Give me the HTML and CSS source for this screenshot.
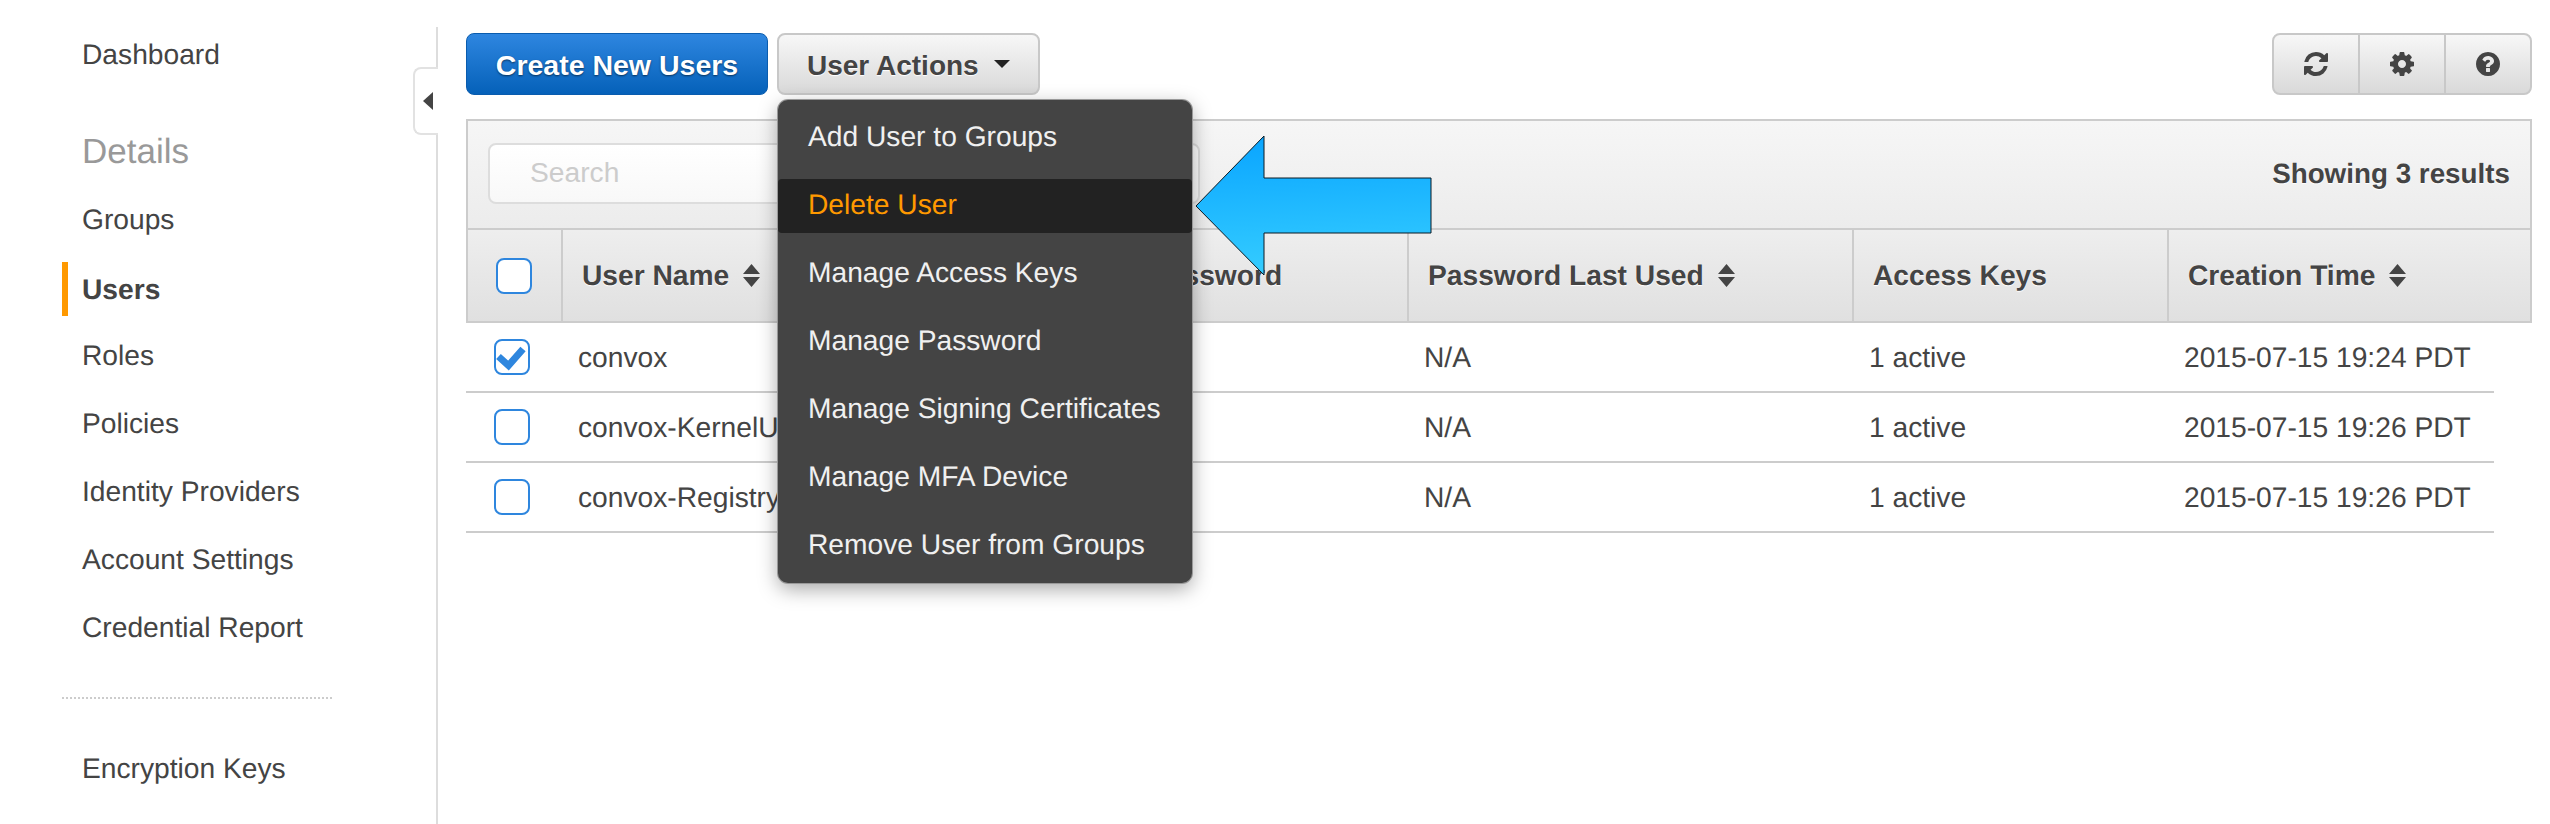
FILE: index.html
```html
<!DOCTYPE html>
<html lang="en">
<head>
<meta charset="utf-8">
<title>Users</title>
<link rel="stylesheet" href="styles.css">
</head>
<body>
<div class="app">
  <nav class="sidebar">
    <a class="nav-item">Dashboard</a>
    <h2 class="nav-heading">Details</h2>
    <a class="nav-item">Groups</a>
    <a class="nav-item active">Users</a>
    <a class="nav-item">Roles</a>
    <a class="nav-item">Policies</a>
    <a class="nav-item">Identity Providers</a>
    <a class="nav-item">Account Settings</a>
    <a class="nav-item">Credential Report</a>
    <div class="nav-divider"></div>
    <a class="nav-item">Encryption Keys</a>
  </nav>
  <div class="rail">
    <div class="rail-tab"><span class="rail-caret"></span></div>
  </div>
  <main class="main">
    <div class="actions">
      <button class="btn btn-primary">Create New Users</button>
      <div class="dropdown">
        <button class="btn btn-default">User Actions<span class="caret"></span></button>
        <ul class="menu">
          <li class="menu-item">Add User to Groups</li>
          <li class="menu-item selected">Delete User</li>
          <li class="menu-item">Manage Access Keys</li>
          <li class="menu-item">Manage Password</li>
          <li class="menu-item">Manage Signing Certificates</li>
          <li class="menu-item">Manage MFA Device</li>
          <li class="menu-item">Remove User from Groups</li>
        </ul>
      </div>
      <div class="btn-group">
        <button class="icon-btn" aria-label="Refresh">
          <svg class="icon" viewBox="0 0 1792 1792"><path d="M1639 1056q0 5-1 7-64 268-268 434.5t-478 166.5q-146 0-282.5-55t-243.5-157l-129 129q-19 19-45 19t-45-19-19-45v-448q0-26 19-45t45-19h448q26 0 45 19t19 45-19 45l-137 137q71 66 161 102t187 36q134 0 250-65t186-179q11-17 53-117 8-23 30-23h192q13 0 22.5 9.5t9.5 22.5zm25-800v448q0 26-19 45t-45 19h-448q-26 0-45-19t-19-45 19-45l138-138q-148-137-349-137-134 0-250 65t-186 179q-11 17-53 117-8 23-30 23h-199q-13 0-22.5-9.5t-9.5-22.5v-7q65-268 270-434.5t480-166.5q146 0 284 55.5t245 156.5l130-129q19-19 45-19t45 19 19 45z"/></svg>
        </button>
        <button class="icon-btn" aria-label="Settings">
          <svg class="icon" viewBox="0 0 1792 1792"><path d="M1152 896q0-106-75-181t-181-75-181 75-75 181 75 181 181 75 181-75 75-181zm512-109v222q0 12-8 23t-20 13l-185 28q-19 54-39 91 35 50 107 138 10 12 10 25t-9 23q-27 37-99 108t-94 71q-12 0-26-9l-138-108q-44 23-91 38-16 136-29 186-7 28-36 28h-222q-14 0-24.5-8.5t-11.5-21.5l-28-184q-49-16-90-37l-141 107q-10 9-25 9-14 0-25-11-126-114-165-168-7-10-7-23 0-12 8-23 15-21 51-66.5t54-70.5q-27-50-41-99l-183-27q-13-2-21-12.5t-8-23.5v-222q0-12 8-23t19-13l186-28q14-46 39-92-40-57-107-138-10-12-10-24 0-10 9-23 26-36 98.5-107.5t94.5-71.5q13 0 26 10l138 107q44-23 91-38 16-136 29-186 7-28 36-28h222q14 0 24.5 8.5t11.5 21.5l28 184q49 16 90 37l142-107q9-9 24-9 13 0 25 10 129 119 165 170 7 8 7 22 0 12-8 23-15 21-51 66.5t-54 70.5q26 50 41 98l183 28q13 2 21 12.5t8 23.5z"/></svg>
        </button>
        <button class="icon-btn" aria-label="Help">
          <svg class="icon" viewBox="0 0 1792 1792"><path d="M1024 1376v-192q0-14-9-23t-23-9h-192q-14 0-23 9t-9 23v192q0 14 9 23t23 9h192q14 0 23-9t9-23zm256-672q0-88-55.5-163t-138.5-116-170-41q-243 0-371 213-15 24 8 42l132 100q7 6 19 6 16 0 25-12 53-68 86-92 34-24 86-24 48 0 85.5 26t37.5 59q0 38-20 61t-68 45q-63 28-115.5 86.5t-52.5 125.5v36q0 14 9 23t23 9h192q14 0 23-9t9-23q0-19 21.5-49.5t54.5-49.5q32-18 49-28.5t46-35 44.5-48 28-60.5 12.5-81zm384 192q0 209-103 385.5t-279.5 279.5-385.5 103-385.5-103-279.5-279.5-103-385.5 103-385.5 279.5-279.5 385.5-103 385.5 103 279.5 279.5 103 385.5z"/></svg>
        </button>
      </div>
    </div>

    <section class="panel">
      <div class="filter-bar">
        <input class="search" type="text" placeholder="Search">
        <span class="count">Showing 3 results</span>
      </div>
      <div class="row head">
        <div class="cell check-cell"><span class="checkbox"></span></div>
        <div class="cell">User Name<svg class="sort" viewBox="0 0 17 23"><path d="M8.500 0L17 10H0zM0 13h17L8.500 23z"/></svg></div>
        <div class="cell">Password</div>
        <div class="cell">Password Last Used<svg class="sort" viewBox="0 0 17 23"><path d="M8.500 0L17 10H0zM0 13h17L8.500 23z"/></svg></div>
        <div class="cell">Access Keys</div>
        <div class="cell">Creation Time<svg class="sort" viewBox="0 0 17 23"><path d="M8.500 0L17 10H0zM0 13h17L8.500 23z"/></svg></div>
      </div>
    </section>
    <div class="body">
      <div class="row item">
        <div class="cell check-cell"><span class="checkbox"><svg class="tick" viewBox="0 0 32 32"><path d="M2.500 15.500L12.500 24.500L27 8"/></svg></span></div>
        <div class="cell">convox</div>
        <div class="cell"></div>
        <div class="cell">N/A</div>
        <div class="cell">1 active</div>
        <div class="cell">2015-07-15 19:24 PDT</div>
      </div>
      <div class="row item">
        <div class="cell check-cell"><span class="checkbox"></span></div>
        <div class="cell">convox-KernelUser</div>
        <div class="cell"></div>
        <div class="cell">N/A</div>
        <div class="cell">1 active</div>
        <div class="cell">2015-07-15 19:26 PDT</div>
      </div>
      <div class="row item">
        <div class="cell check-cell"><span class="checkbox"></span></div>
        <div class="cell">convox-RegistryUser</div>
        <div class="cell"></div>
        <div class="cell">N/A</div>
        <div class="cell">1 active</div>
        <div class="cell">2015-07-15 19:26 PDT</div>
      </div>
    </div>
  </main>
  <svg class="arrow" viewBox="0 0 238 142">
    <defs>
      <linearGradient id="arrowFill" x1="0.35" y1="0" x2="0.42" y2="1">
        <stop offset="0" stop-color="#0aa5ff"/>
        <stop offset="1" stop-color="#35cdff"/>
      </linearGradient>
    </defs>
    <polygon points="1,71 69,1 69,43 236,43 236,98 69,98 69,140" fill="url(#arrowFill)" stroke="#0a1a24" stroke-width="1"/>
  </svg>
</div>
</body>
</html>
```

FILE: styles.css
```css
* { box-sizing: border-box; }

html, body {
  margin: 0;
  height: 100%;
  background: #fff;
}

body {
  font-family: "Liberation Sans", Arial, sans-serif;
  font-size: 28.2px;
  color: #444;
  text-rendering: geometricPrecision;
}

.app {
  position: relative;
  display: flex;
  height: 824px;
  overflow: hidden;
}

/* Sidebar */
.sidebar {
  flex: 0 0 436px;
  display: flex;
  flex-direction: column;
  padding-top: 20px;
}

.nav-item {
  display: block;
  height: 54px;
  margin: 7px 0 7px 62px;
  padding-left: 14px;
  border-left: 6px solid transparent;
  line-height: 54px;
  white-space: nowrap;
}

.nav-item.active {
  border-left-color: #f90;
  font-weight: 700;
  margin-top: 9px;
  margin-bottom: 5px;
}

.nav-heading {
  margin: 28px 0 0 82px;
  height: 69px;
  line-height: 71px;
  font-size: 35px;
  font-weight: 400;
  color: #999;
}

.nav-divider {
  margin: 36px 104px 35px 62px;
  border-top: 2px dotted #ccc;
}

.rail {
  position: relative;
  flex: 0 0 2px;
  margin-top: 27px;
  background: #ddd;
}

.rail-tab {
  position: absolute;
  top: 40px;
  right: 0;
  width: 25px;
  height: 68px;
  display: flex;
  align-items: center;
  padding-left: 8px;
  background: #fff;
  border: 2px solid #e2e2e2;
  border-right: 0;
  border-radius: 8px 0 0 8px;
}

.rail-caret {
  width: 0;
  height: 0;
  border-top: 9px solid transparent;
  border-bottom: 9px solid transparent;
  border-right: 10px solid #444;
}

/* Main column */
.main {
  flex: 1;
  min-width: 0;
  padding: 33px 18px 0 28px;
}

.actions {
  display: flex;
  align-items: stretch;
  gap: 9px;
  height: 62px;
}

.btn {
  height: 62px;
  border-radius: 8px;
  font: 700 28px "Liberation Sans", Arial, sans-serif;
  white-space: nowrap;
}

.btn-primary {
  width: 302px;
  padding: 3px 0 0;
  color: #fff;
  font-size: 28.5px;
  background: linear-gradient(#2e86e0, #0561b9);
  border: 1px solid #0a5cae;
  text-shadow: 0 1px 2px rgba(0, 0, 0, .55);
}

.btn-default {
  display: flex;
  align-items: center;
  width: 263px;
  padding: 3px 0 0 28px;
  color: #444;
  background: linear-gradient(#f7f7f7, #d9d9d9);
  border: 2px solid #c8c8c8;
  text-shadow: 0 1px 1px #fff;
}

.caret {
  margin: -3px 0 0 15px;
  width: 0;
  height: 0;
  border-left: 8px solid transparent;
  border-right: 8px solid transparent;
  border-top: 8px solid #222;
}

.dropdown {
  position: relative;
}

.menu {
  position: absolute;
  z-index: 3;
  top: 67px;
  left: 1px;
  display: flex;
  flex-direction: column;
  gap: 14px;
  width: 414px;
  height: 483px;
  margin: 0;
  padding: 11px 0 0;
  list-style: none;
  background: #444;
  border-radius: 10px;
  box-shadow: 0 0 0 1px #999, 0 6px 20px rgba(0, 0, 0, .35);
}

.menu-item {
  flex: 0 0 54px;
  padding-left: 30px;
  line-height: 51px;
  color: #f0f0f0;
  white-space: nowrap;
}

.menu-item.selected {
  background: #222;
  color: #f90;
  border-radius: 4px;
}

.btn-group {
  display: flex;
  margin-left: auto;
  width: 260px;
  height: 62px;
  background: linear-gradient(#f7f7f7, #d9d9d9);
  border: 2px solid #c8c8c8;
  border-radius: 8px;
}

.icon-btn {
  flex: 1;
  display: flex;
  align-items: center;
  justify-content: center;
  padding: 0;
  background: none;
  border: 0;
  border-left: 2px solid #c8c8c8;
}

.icon-btn:first-child {
  border-left: 0;
}

.icon {
  width: 28px;
  height: 28px;
  fill: #444;
}

/* Table */
.panel {
  margin-top: 24px;
  border: 2px solid #ccc;
}

.filter-bar {
  display: flex;
  align-items: center;
  justify-content: space-between;
  height: 107px;
  padding: 0 20px 2px 20px;
  background: linear-gradient(#f6f6f6, #ececec);
}

.search {
  width: 712px;
  height: 61px;
  padding: 0 0 2px 40px;
  font: 400 28.2px "Liberation Sans", Arial, sans-serif;
  background: linear-gradient(#fff, #f8f8f8);
  border: 2px solid #ddd;
  border-radius: 8px;
}

.search::placeholder {
  color: #ccc;
  opacity: 1;
}

.count {
  font-size: 27.8px;
  font-weight: 700;
  text-shadow: 0 1px 1px #fff;
}

.row {
  display: grid;
  align-items: stretch;
}

.head {
  grid-template-columns: 93px 567px 279px 445px 315px 1fr;
  height: 93px;
  border-top: 2px solid #ccc;
  background: linear-gradient(#eee, #e0e0e0);
  font-weight: 700;
  text-shadow: 0 1px 1px #fff;
}

.head .cell {
  display: flex;
  align-items: center;
  padding-left: 19px;
  border-left: 2px solid #ccc;
  white-space: nowrap;
}

.head .check-cell {
  padding-left: 28px;
  border-left: 0;
}

.sort {
  width: 17px;
  height: 23px;
  margin-left: 14px;
  fill: #444;
}

.body {
  margin-right: 38px;
}

.item {
  grid-template-columns: 95px 567px 279px 445px 315px 1fr;
  height: 70px;
  border-bottom: 2px solid #ccc;
}

.item .cell {
  display: flex;
  align-items: center;
  padding-left: 17px;
  white-space: nowrap;
}

.item .check-cell {
  padding-left: 28px;
}

.checkbox {
  display: block;
  width: 36px;
  height: 36px;
  background: #fff;
  border: 2px solid #2e86de;
  border-radius: 8px;
}

.tick {
  display: block;
  width: 32px;
  height: 32px;
  fill: none;
  stroke: #2e86de;
  stroke-width: 7;
}

.arrow {
  position: absolute;
  z-index: 4;
  left: 1195px;
  top: 135px;
  width: 238px;
  height: 142px;
}
```
